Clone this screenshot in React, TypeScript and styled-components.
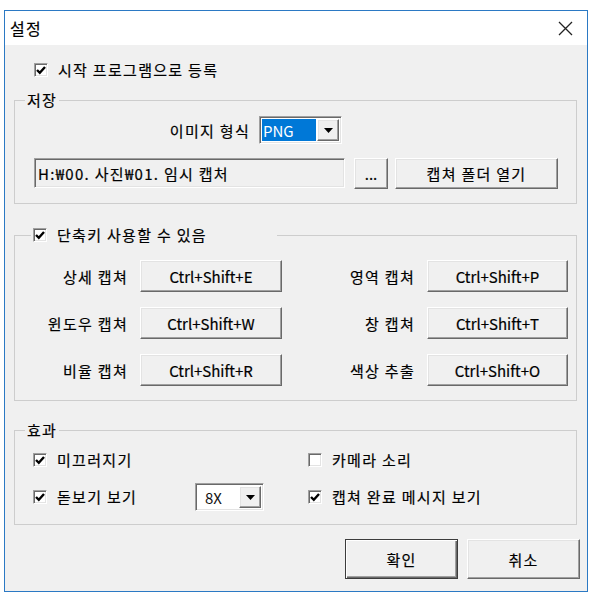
import React from "react";
import styled, { createGlobalStyle, css } from "styled-components";

const GlobalStyle = createGlobalStyle`
  body {
    margin: 0;
    background: #fff;
    font-family: "Noto Sans CJK KR", "Noto Sans", sans-serif;
    font-size: 15px;
    letter-spacing: 1.3px;
    color: #000;
    -webkit-text-stroke: 0.2px #000;
  }
`;

const raised = css`
  border: 1px solid;
  border-color: #fff #696969 #696969 #fff;
  box-shadow: inset -1px -1px #a0a0a0, inset 1px 1px #e3e3e3;
  background: #f0f0f0;
`;

const sunken = css`
  border: 1px solid;
  border-color: #a0a0a0 #fff #fff #a0a0a0;
  box-shadow: inset 1px 1px #696969, inset -1px -1px #e3e3e3;
`;

const Window = styled.div`
  box-sizing: border-box;
  width: 584px;
  height: 582px;
  margin: 10px 0 0 4px;
  border: 1px solid #2b79c4;
  background: #f0f0f0;
  display: flex;
  flex-direction: column;
`;

const TitleBar = styled.div`
  height: 34px;
  background: #fff;
  display: flex;
  align-items: center;
  justify-content: space-between;
  padding: 0 14px 0 5px;
  font-size: 16px;
`;

const Body = styled.div`
  padding: 0 10px 0 9px;
  display: flex;
  flex-direction: column;
`;

const CheckLabel = styled.label`
  display: flex;
  align-items: center;
  gap: 10px;
  height: 18px;
  line-height: 18px;
  white-space: nowrap;
`;

const Box = styled.span`
  box-sizing: border-box;
  width: 14px;
  height: 14px;
  background: #fff;
  ${sunken};
  display: flex;
  align-items: center;
  justify-content: center;
`;

const StartRow = styled.div`
  margin-top: 16px;
  padding-left: 20px;
`;

const Group = styled.fieldset<{ $mt: number; $pb: number }>`
  margin: ${(p) => p.$mt}px 0 0;
  padding: 0 0 ${(p) => p.$pb}px;
  border: 1px solid #cdcdcd;
  min-width: 0;
`;

const Legend = styled.legend<{ $ml: number; $pr?: number }>`
  margin-left: ${(p) => p.$ml}px;
  padding: 0 ${(p) => p.$pr ?? 2}px 0 2px;
  line-height: 18px;
  height: 18px;
`;

const FormatRow = styled.div`
  display: flex;
  align-items: center;
  gap: 9px;
  margin-top: 7px;
  padding-left: 135px;
`;

const FieldLabel = styled.span<{ $w: number }>`
  width: ${(p) => p.$w}px;
  text-align: right;
  white-space: nowrap;
`;

const Combo = styled.div<{ $w: number }>`
  box-sizing: border-box;
  width: ${(p) => p.$w}px;
  height: 28px;
  ${sunken};
  background: #fff;
  padding: 2px;
  display: flex;
  gap: 1px;
`;

const ComboValue = styled.div<{ $selected?: boolean }>`
  flex: 1;
  display: flex;
  align-items: center;
  letter-spacing: 0;
  padding-left: ${(p) => (p.$selected ? 1 : 7)}px;
  background: ${(p) => (p.$selected ? "#0078d7" : "#fff")};
  color: ${(p) => (p.$selected ? "#fff" : "#111")};
  -webkit-text-stroke: 0;
`;

const ComboArrow = styled.div`
  box-sizing: border-box;
  width: 22px;
  ${raised};
  display: flex;
  align-items: center;
  justify-content: center;
`;

const PathRow = styled.div`
  display: flex;
  align-items: flex-start;
  margin-top: 14px;
  padding-left: 19px;
`;

const PathBox = styled.div`
  box-sizing: border-box;
  width: 311px;
  height: 30px;
  ${sunken};
  background: #f0f0f0;
  display: flex;
  align-items: center;
  padding-left: 3px;
  margin-right: 9px;
  white-space: nowrap;
`;

const Button = styled.button<{ $w: number; $h: number; $primary?: boolean; $ml?: number; $latin?: boolean }>`
  box-sizing: border-box;
  width: ${(p) => p.$w}px;
  height: ${(p) => p.$h}px;
  margin: 0 0 0 ${(p) => p.$ml ?? 0}px;
  padding: 0;
  font: inherit;
  letter-spacing: ${(p) => (p.$latin ? 0 : 1.3)}px;
  color: #000;
  background: #f0f0f0;
  white-space: nowrap;
  ${(p) =>
    p.$primary
      ? css`
          border: 1px solid #3c3c3c;
          box-shadow: inset 1px 1px #fff, inset -1px -1px #696969, inset -2px -2px #a0a0a0;
        `
      : raised};
`;

const ShortcutGrid = styled.div`
  display: grid;
  grid-template-columns: 98px 142px 121px 141px;
  grid-auto-rows: 32px;
  column-gap: 12px;
  row-gap: 15px;
  align-items: center;
  margin-top: 16px;
  padding-left: 15px;
`;

const EffectGrid = styled.div`
  display: grid;
  grid-template-columns: 275px auto;
  grid-template-rows: 18px 28px;
  row-gap: 14px;
  align-items: center;
  margin-top: 12px;
  padding-left: 18px;
`;

const EffectCell = styled.div`
  display: flex;
  align-items: center;
`;

const MagnifierLabel = styled.div`
  width: 162px;
`;

const Footer = styled.div`
  display: flex;
  justify-content: flex-end;
  gap: 9px;
  margin: 14px -3px 0 0;
`;

const Check = ({ on }: { on: boolean }) => (
  <Box>
    {on && (
      <svg width="10" height="10" viewBox="0 0 10 10">
        <polyline points="1,5 3.8,7.8 9,2" fill="none" stroke="#000" strokeWidth="2.4" />
      </svg>
    )}
  </Box>
);

const Arrow = () => (
  <svg width="9" height="5" viewBox="0 0 9 5">
    <polygon points="0,0 9,0 4.5,5" fill="#000" />
  </svg>
);

const shortcuts = [
  ["상세 캡쳐", "Ctrl+Shift+E", "영역 캡쳐", "Ctrl+Shift+P"],
  ["윈도우 캡쳐", "Ctrl+Shift+W", "창 캡쳐", "Ctrl+Shift+T"],
  ["비율 캡쳐", "Ctrl+Shift+R", "색상 추출", "Ctrl+Shift+O"],
];

export default function App() {
  return (
    <>
      <GlobalStyle />
      <Window>
        <TitleBar>
          <span>설정</span>
          <svg width="15" height="15" viewBox="0 0 15 15">
            <path d="M1 1 L14 14 M14 1 L1 14" stroke="#222" strokeWidth="1.3" />
          </svg>
        </TitleBar>
        <Body>
          <StartRow>
            <CheckLabel>
              <Check on />
              시작 프로그램으로 등록
            </CheckLabel>
          </StartRow>

          <Group $mt={12} $pb={14}>
            <Legend $ml={10}>저장</Legend>
            <FormatRow>
              <FieldLabel $w={100}>이미지 형식</FieldLabel>
              <Combo $w={83}>
                <ComboValue $selected>PNG</ComboValue>
                <ComboArrow>
                  <Arrow />
                </ComboArrow>
              </Combo>
            </FormatRow>
            <PathRow>
              <PathBox>H:₩00. 사진₩01. 임시 캡처</PathBox>
              <Button $w={34} $h={31} $latin>...</Button>
              <Button $w={163} $h={31} $ml={7}>캡쳐 폴더 열기</Button>
            </PathRow>
          </Group>

          <Group $mt={22} $pb={14}>
            <Legend $ml={16} $pr={70}>
              <CheckLabel>
                <Check on />
                단축키 사용할 수 있음
              </CheckLabel>
            </Legend>
            <ShortcutGrid>
              {shortcuts.map(([l1, k1, l2, k2]) => (
                <React.Fragment key={k1}>
                  <FieldLabel $w={98}>{l1}</FieldLabel>
                  <Button $w={142} $h={32} $latin>{k1}</Button>
                  <FieldLabel $w={121}>{l2}</FieldLabel>
                  <Button $w={141} $h={32} $latin>{k2}</Button>
                </React.Fragment>
              ))}
            </ShortcutGrid>
          </Group>

          <Group $mt={20} $pb={13}>
            <Legend $ml={10}>효과</Legend>
            <EffectGrid>
              <CheckLabel>
                <Check on />
                미끄러지기
              </CheckLabel>
              <CheckLabel>
                <Check on={false} />
                카메라 소리
              </CheckLabel>
              <EffectCell>
                <MagnifierLabel>
                  <CheckLabel>
                    <Check on />
                    돋보기 보기
                  </CheckLabel>
                </MagnifierLabel>
                <Combo $w={69}>
                  <ComboValue>8X</ComboValue>
                  <ComboArrow>
                    <Arrow />
                  </ComboArrow>
                </Combo>
              </EffectCell>
              <CheckLabel>
                <Check on />
                캡쳐 완료 메시지 보기
              </CheckLabel>
            </EffectGrid>
          </Group>

          <Footer>
            <Button $w={113} $h={40} $primary>확인</Button>
            <Button $w={113} $h={40}>취소</Button>
          </Footer>
        </Body>
      </Window>
    </>
  );
}
